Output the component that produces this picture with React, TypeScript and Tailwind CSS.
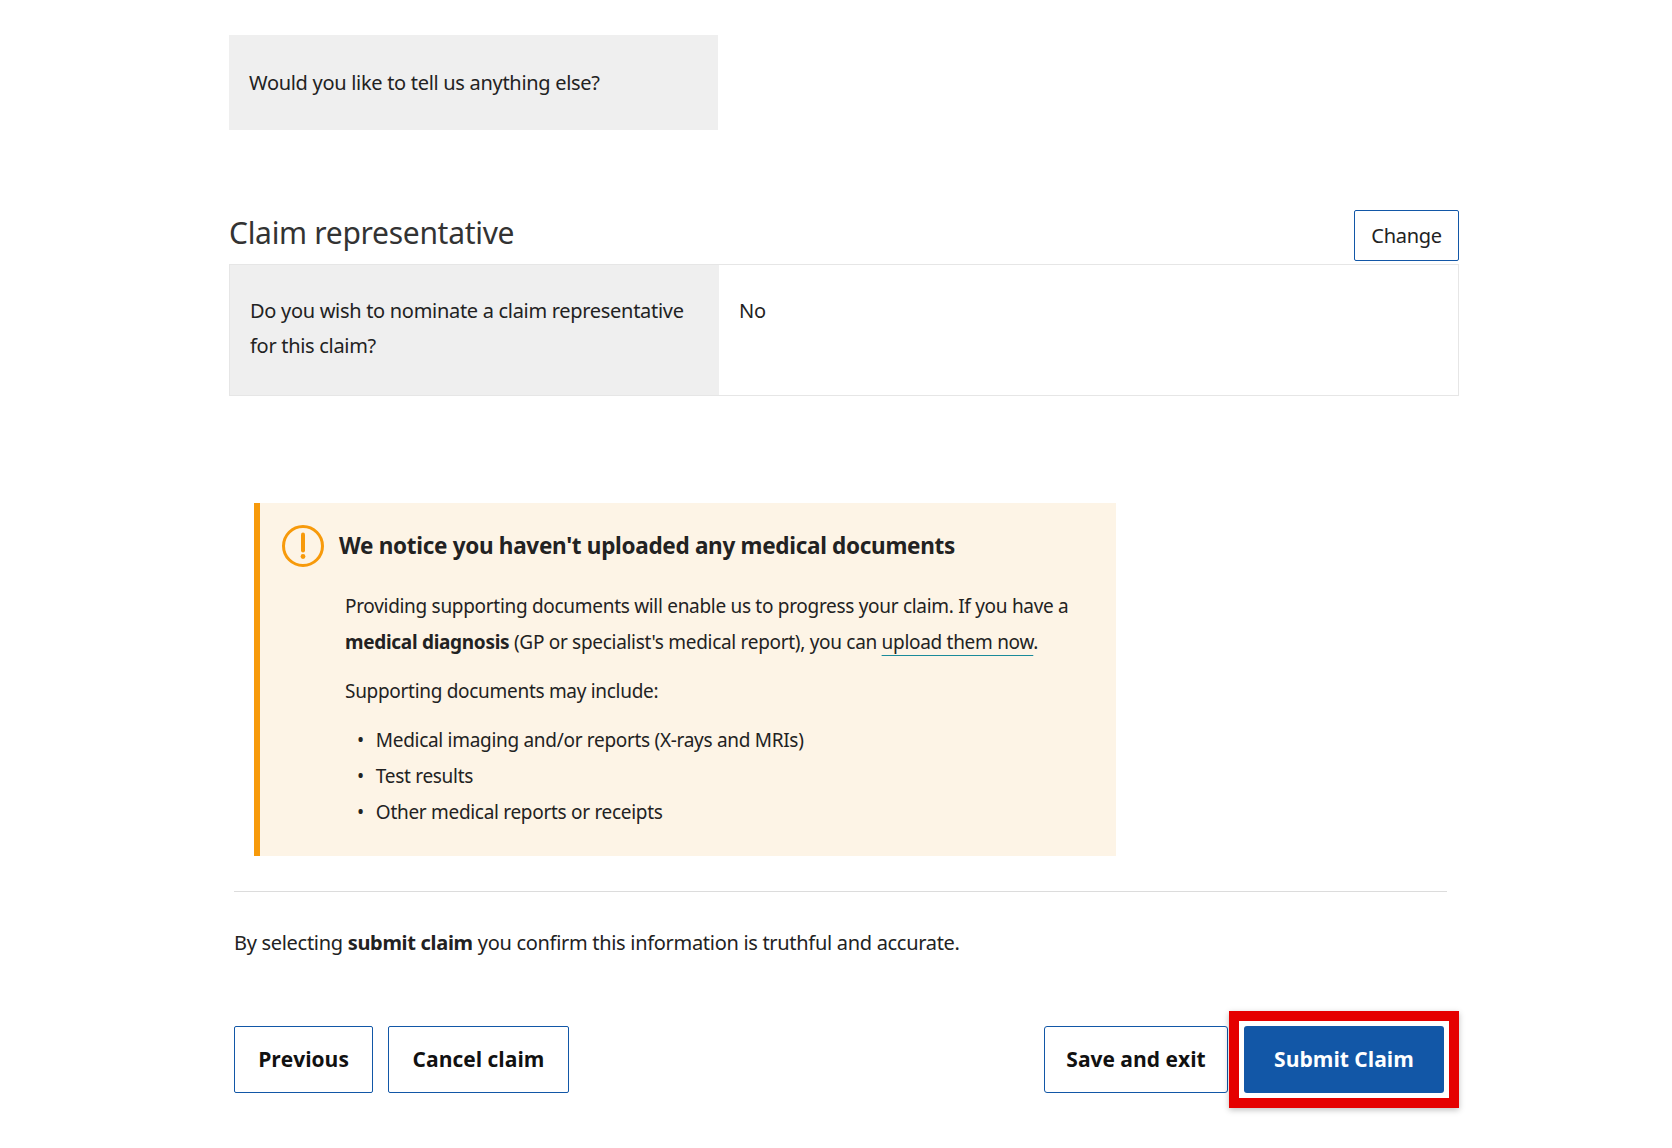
export default function App() {
  const body = { fontFamily: '"Noto Sans", "Open Sans", sans-serif' };
  const btn = { fontFamily: '"Open Sans", "Noto Sans", sans-serif' };
  return (
    <main className="min-h-screen bg-white text-[#222] tracking-[-0.3px]" style={body}>
      <div className="ml-[229px] w-[1230px] pt-[35px]">
        {/* Previous section tail */}
        <div className="w-[489px] h-[95px] bg-[#efefef] flex items-center px-5 text-[20px]">
          Would you like to tell us anything else?
        </div>

        {/* Claim representative */}
        <div className="mt-[80px] flex items-end justify-between">
          <h2 className="text-[30px] leading-none pb-[13px] text-[#333]">Claim representative</h2>
          <button className="w-[105px] h-[51px] border border-[#1257a7] rounded-[2px] text-[20px] text-[#222] bg-white">
            Change
          </button>
        </div>
        <div className="mt-[3px] flex border border-[#e6e6e6] h-[132px]">
          <div className="w-[489px] bg-[#efefef] px-5 pt-[28px] text-[20px] leading-[35px]">
            Do you wish to nominate a claim representative for this claim?
          </div>
          <div className="flex-1 px-5 pt-[28px] text-[20px] leading-[35px]">No</div>
        </div>

        {/* Warning */}
        <div className="mt-[107px] ml-[25px] w-[862px] bg-[#fdf4e6] border-l-[6px] border-[#f79a0b] pl-[21px] pr-5 pt-[21px] pb-[26px]">
          <div className="flex items-center gap-[14px]">
            <svg width="44" height="44" viewBox="0 0 44 44" fill="none">
              <circle cx="22" cy="22" r="19.5" stroke="#f79a0b" strokeWidth="3" />
              <path d="M22 10.5v16" stroke="#f79a0b" strokeWidth="4" strokeLinecap="round" />
              <circle cx="22" cy="32.5" r="2.4" fill="#f79a0b" />
            </svg>
            <h3 className="text-[22.5px] font-bold text-[#222]">We notice you haven't uploaded any medical documents</h3>
          </div>
          <div className="pl-[64px] mt-[20px] text-[19px] leading-[36px]">
            <p>
              Providing supporting documents will enable us to progress your claim. If you have a{' '}
              <strong>medical diagnosis</strong> (GP or specialist's medical report), you can{' '}
              <a className="underline decoration-[#1a8b9a] underline-offset-[6px]">upload them now</a>.
            </p>
            <p className="mt-[13px]">Supporting documents may include:</p>
            <ul className="mt-[13px] pl-[12px]">
              {['Medical imaging and/or reports (X-rays and MRIs)', 'Test results', 'Other medical reports or receipts'].map((t) => (
                <li key={t} className="flex gap-[12px] leading-[36px]">
                  <span>•</span>
                  <span>{t}</span>
                </li>
              ))}
            </ul>
          </div>
        </div>

        <div className="ml-[5px] mr-[12px] mt-[35px] border-t border-[#dcdcdc]" />
        <p className="ml-[5px] mt-[36px] text-[20px]">
          By selecting <strong>submit claim</strong> you confirm this information is truthful and accurate.
        </p>

        <div className="mt-[53px] ml-[5px] flex items-center justify-between tracking-normal" style={btn}>
          <div className="flex gap-[15px]">
            <button className="w-[139px] h-[67px] border border-[#1257a7] rounded-[2px] text-[21px] font-bold text-[#111] bg-white">Previous</button>
            <button className="w-[181px] h-[67px] border border-[#1257a7] rounded-[2px] text-[21px] font-bold text-[#111] bg-white">Cancel claim</button>
          </div>
          <div className="flex items-center">
            <button className="w-[184px] h-[67px] border border-[#1257a7] rounded-[3px] text-[21px] font-bold text-[#111] bg-white mr-px">Save and exit</button>
            <div className="border-[10px] border-[#e50000] p-[5px] shadow-[0_2px_6px_rgba(0,0,0,0.25)]">
              <button className="w-[200px] h-[67px] rounded-[3px] bg-[#1257a7] text-white text-[21px] font-bold">Submit Claim</button>
            </div>
          </div>
        </div>
      </div>
    </main>
  );
}
